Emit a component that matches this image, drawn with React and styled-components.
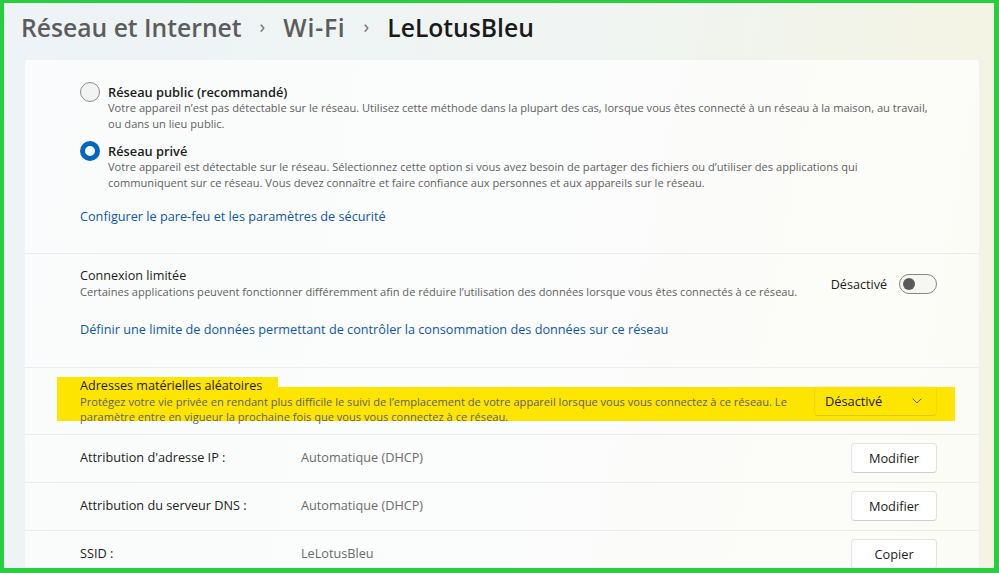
import React from 'react';
import styled, { createGlobalStyle } from 'styled-components';

const GlobalStyle = createGlobalStyle`
  html, body {
    margin: 0;
    padding: 0;
  }
  body {
    font-family: "Segoe UI", "Open Sans", "Noto Sans", sans-serif;
    color: #1b1b1b;
  }
`;

const Frame = styled.div`
  width: 999px;
  height: 573px;
  box-sizing: border-box;
  border: 4px solid #27cf3f;
  border-top-width: 3px;
  border-right-width: 5px;
  border-bottom-width: 5px;
  overflow: hidden;
  background: linear-gradient(100deg, #edf3f6 0%, #f0f4f2 55%, #f4f4e0 100%);
  display: flex;
  flex-direction: column;
`;

const Breadcrumb = styled.header`
  height: 56px;
  box-sizing: border-box;
  flex-shrink: 0;
  display: flex;
  align-items: center;
  gap: 18px;
  padding: 0 0 8px 17px;
  font-size: 24.7px;
  font-weight: 600;
  color: #5c5c5c;
`;

const Crumb = styled.span`
  color: ${p => (p.$current ? '#1a1a1a' : '#5c5c5c')};
  letter-spacing: ${p => (p.$wide ? '0.8px' : '0')};
`;

const Chevron = styled.span`
  font-size: 19px;
  font-weight: 400;
  color: #707070;
  margin-top: -2px;
`;

const Card = styled.div`
  margin: 0 14px 0 20px;
  display: flex;
  flex-direction: column;
  background: rgba(255, 255, 255, 0.72);
  border: 1px solid rgba(0, 0, 0, 0.04);
  border-bottom: none;
  border-radius: 4px 4px 0 0;
`;

const Panel = styled.section`
  position: relative;
  height: ${p => p.$h}px;
  box-sizing: border-box;
  padding: ${p => p.$pad || '0'};
  padding-left: 55px;
  padding-right: 42px;
  border-top: ${p => (p.$first ? 'none' : '1px solid #e9eded')};
`;

const Options = styled.div`
  display: flex;
  flex-direction: column;
  gap: 11px;
`;

const Option = styled.div`
  display: flex;
  align-items: flex-start;
  gap: 8px;
`;

const Radio = styled.span`
  width: 20px;
  height: 20px;
  box-sizing: border-box;
  border-radius: 50%;
  flex-shrink: 0;
  margin-top: -2px;
  border: ${p => (p.$checked ? '5px solid #0067c0' : '1px solid #8c8c8c')};
  background: ${p => (p.$checked ? '#ffffff' : '#f3f3f3')};
`;

const TextBlock = styled.div`
  display: flex;
  flex-direction: column;
  position: relative;
  z-index: 1;
`;

const Title = styled.div`
  font-size: ${p => (p.$strong ? 12.8 : 12.6)}px;
  line-height: 16px;
  font-weight: ${p => (p.$strong ? 600 : 400)};
  color: #1b1b1b;
  white-space: nowrap;
`;

const Desc = styled.div`
  font-size: 11.1px;
  line-height: ${p => p.$lh || 16}px;
  color: #5f5f5f;
  white-space: nowrap;
`;

const Link = styled.a`
  display: block;
  font-size: 12.7px;
  line-height: 20px;
  color: #0f56a6;
  text-decoration: none;
  margin-top: ${p => p.$mt}px;
`;

const SettingRow = styled.div`
  display: flex;
  align-items: center;
  justify-content: space-between;
`;

const Control = styled.div`
  display: flex;
  align-items: center;
  gap: 12px;
  font-size: 12.6px;
  color: #1b1b1b;
  position: relative;
  z-index: 1;
`;

const Toggle = styled.span`
  width: 38px;
  height: 20px;
  box-sizing: border-box;
  border-radius: 10px;
  border: 1px solid #858585;
  background: #f6f6f3;
  display: flex;
  align-items: center;
  padding-left: 3px;

  &::after {
    content: '';
    width: 12px;
    height: 12px;
    border-radius: 50%;
    background: #5a5a5a;
  }
`;

const Dropdown = styled.div`
  width: 123px;
  height: 30px;
  box-sizing: border-box;
  border-radius: 4px;
  border: 1px solid rgba(0, 0, 0, 0.05);
  border-bottom-color: rgba(0, 0, 0, 0.12);
  display: flex;
  align-items: center;
  justify-content: space-between;
  padding: 0 14px 0 10px;
  font-size: 12.8px;
  color: #1b1b1b;
`;

const Highlight = styled.div`
  position: absolute;
  z-index: 0;
  background: #fde500;
  left: ${p => p.$x}px;
  top: ${p => p.$y}px;
  width: ${p => p.$w}px;
  height: ${p => p.$hh}px;
`;

const InfoRow = styled.div`
  height: 48px;
  box-sizing: border-box;
  display: flex;
  align-items: center;
  padding-left: 55px;
  padding-right: 42px;
  border-top: 1px solid #e9eded;
  font-size: 12.7px;
`;

const Label = styled.span`
  width: 221px;
  color: #1b1b1b;
  margin-top: -4px;
`;

const Value = styled.span`
  flex: 1;
  color: #6b6b6b;
  margin-top: -4px;
`;

const Button = styled.button`
  width: 86px;
  height: 30px;
  margin-top: -2px;
  border-radius: 4px;
  border: 1px solid #e3e3e3;
  border-bottom-color: #cfcfcf;
  background: #ffffff;
  font-family: inherit;
  font-size: 12.8px;
  color: #1b1b1b;
  padding: 0;
`;

function ChevronDown() {
  return (
    <svg width="10" height="6" viewBox="0 0 10 6" fill="none">
      <path d="M1 1l4 4 4-4" stroke="#5a5a5a" strokeWidth="1" strokeLinecap="round" strokeLinejoin="round" />
    </svg>
  );
}

export default function App() {
  return (
    <>
      <GlobalStyle />
      <Frame>
        <Breadcrumb>
          <Crumb>Réseau et Internet</Crumb>
          <Chevron>›</Chevron>
          <Crumb $wide>Wi-Fi</Crumb>
          <Chevron>›</Chevron>
          <Crumb $current>LeLotusBleu</Crumb>
        </Breadcrumb>

        <Card>
          <Panel $first $h={193} $pad="24px 0 0">
            <Options>
              <Option>
                <Radio />
                <TextBlock>
                  <Title $strong>Réseau public (recommandé)</Title>
                  <Desc>
                    Votre appareil n’est pas détectable sur le réseau. Utilisez cette méthode dans la plupart des cas, lorsque vous êtes connecté à un réseau à la maison, au travail,
                  </Desc>
                  <Desc>ou dans un lieu public.</Desc>
                </TextBlock>
              </Option>
              <Option>
                <Radio $checked />
                <TextBlock>
                  <Title $strong>Réseau privé</Title>
                  <Desc>
                    Votre appareil est détectable sur le réseau. Sélectionnez cette option si vous avez besoin de partager des fichiers ou d’utiliser des applications qui
                  </Desc>
                  <Desc>
                    communiquent sur ce réseau. Vous devez connaître et faire confiance aux personnes et aux appareils sur le réseau.
                  </Desc>
                </TextBlock>
              </Option>
            </Options>
            <Link $mt={15}>Configurer le pare-feu et les paramètres de sécurité</Link>
          </Panel>

          <Panel $h={114} $pad="14px 0 0">
            <SettingRow>
              <TextBlock>
                <Title>Connexion limitée</Title>
                <Desc>
                  Certaines applications peuvent fonctionner différemment afin de réduire l’utilisation des données lorsque vous êtes connectés à ce réseau.
                </Desc>
              </TextBlock>
              <Control>
                Désactivé
                <Toggle />
              </Control>
            </SettingRow>
            <Link $mt={19}>Définir une limite de données permettant de contrôler la consommation des données sur ce réseau</Link>
          </Panel>

          <Panel $h={67} $pad="10px 0 0">
            <Highlight $x={32} $y={9} $w={221} $hh={14} />
            <Highlight $x={32} $y={19} $w={898} $hh={34} />
            <SettingRow>
              <TextBlock>
                <Title>Adresses matérielles aléatoires</Title>
                <Desc $lh={15}>
                  Protégez votre vie privée en rendant plus difficile le suivi de l’emplacement de votre appareil lorsque vous vous connectez à ce réseau. Le
                </Desc>
                <Desc $lh={15}>
                  paramètre entre en vigueur la prochaine fois que vous vous connectez à ce réseau.
                </Desc>
              </TextBlock>
              <Control>
                <Dropdown>
                  Désactivé
                  <ChevronDown />
                </Dropdown>
              </Control>
            </SettingRow>
          </Panel>

          <InfoRow>
            <Label>Attribution d'adresse IP :</Label>
            <Value>Automatique (DHCP)</Value>
            <Button>Modifier</Button>
          </InfoRow>
          <InfoRow>
            <Label>Attribution du serveur DNS :</Label>
            <Value>Automatique (DHCP)</Value>
            <Button>Modifier</Button>
          </InfoRow>
          <InfoRow>
            <Label>SSID :</Label>
            <Value>LeLotusBleu</Value>
            <Button>Copier</Button>
          </InfoRow>
        </Card>
      </Frame>
    </>
  );
}
